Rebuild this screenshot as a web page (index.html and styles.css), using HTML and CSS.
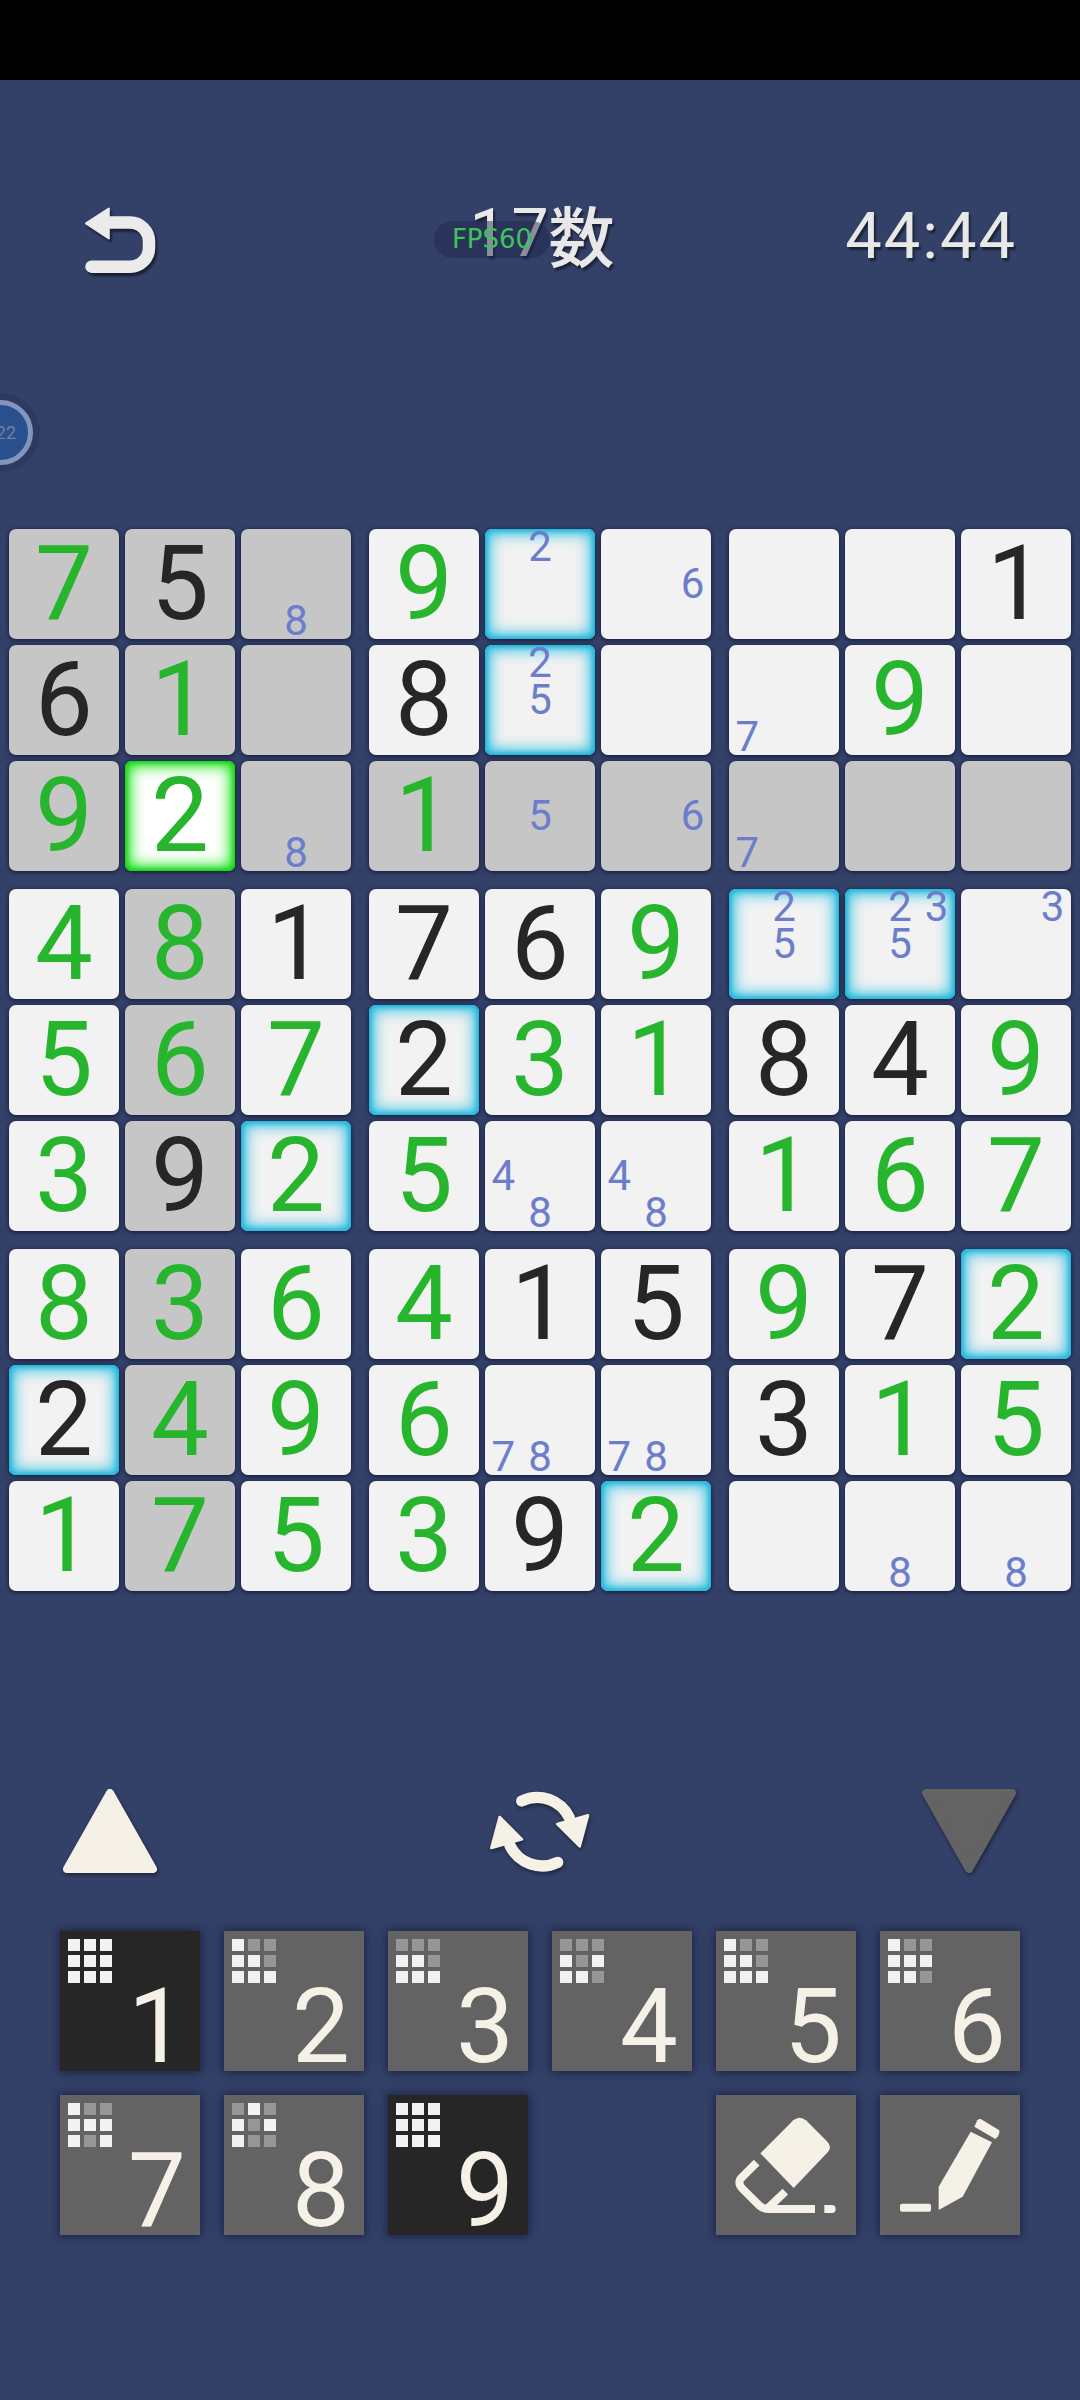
FILE: index.html
```html
<!DOCTYPE html>
<html lang="ja">
<head>
    <meta charset="UTF-8">
    <meta name="viewport" content="width=device-width, initial-scale=1.0">
    <title>Sudoku</title>
    <link rel="stylesheet" href="styles.css">
</head>
<body>
    <div class="page">
        <div class="status-bar"></div>

        <div class="header">
            <svg class="back-icon" viewBox="0 0 73 70">
                <path class="back-line" d="M22 17.5H46a19 19 0 0 1 19 19V42.7a19 19 0 0 1-19 19H7.5"/>
                <path class="back-head" d="M2 18.3L24.8 3.5V33.5Z"/>
            </svg>
            <div class="title"><span class="title-num">17</span><span class="title-kanji">数</span></div>
            <div class="timer">44:44</div>
        </div>

        <div class="fps">FPS60</div>
        <div class="side-badge"><span>22</span></div>

        <div class="board">
            <div class="box">
                <div class="cell shade green">7</div>
                <div class="cell shade dark">5</div>
                <div class="cell shade notes"><span class="n8">8</span></div>
                <div class="cell shade dark">6</div>
                <div class="cell shade green">1</div>
                <div class="cell shade"></div>
                <div class="cell shade green">9</div>
                <div class="cell picked green">2</div>
                <div class="cell shade notes"><span class="n8">8</span></div>
            </div>
            <div class="box">
                <div class="cell green">9</div>
                <div class="cell glow notes"><span class="n2">2</span></div>
                <div class="cell notes"><span class="n6">6</span></div>
                <div class="cell dark">8</div>
                <div class="cell glow notes"><span class="n2">2</span><span class="n5">5</span></div>
                <div class="cell"></div>
                <div class="cell shade green">1</div>
                <div class="cell shade notes"><span class="n5">5</span></div>
                <div class="cell shade notes"><span class="n6">6</span></div>
            </div>
            <div class="box">
                <div class="cell"></div>
                <div class="cell"></div>
                <div class="cell dark">1</div>
                <div class="cell notes"><span class="n7">7</span></div>
                <div class="cell green">9</div>
                <div class="cell"></div>
                <div class="cell shade notes"><span class="n7">7</span></div>
                <div class="cell shade"></div>
                <div class="cell shade"></div>
            </div>

            <div class="box">
                <div class="cell green">4</div>
                <div class="cell shade green">8</div>
                <div class="cell dark">1</div>
                <div class="cell green">5</div>
                <div class="cell shade green">6</div>
                <div class="cell green">7</div>
                <div class="cell green">3</div>
                <div class="cell shade dark">9</div>
                <div class="cell glow green">2</div>
            </div>
            <div class="box">
                <div class="cell dark">7</div>
                <div class="cell dark">6</div>
                <div class="cell green">9</div>
                <div class="cell glow dark">2</div>
                <div class="cell green">3</div>
                <div class="cell green">1</div>
                <div class="cell green">5</div>
                <div class="cell notes"><span class="n4">4</span><span class="n8">8</span></div>
                <div class="cell notes"><span class="n4">4</span><span class="n8">8</span></div>
            </div>
            <div class="box">
                <div class="cell glow notes"><span class="n2">2</span><span class="n5">5</span></div>
                <div class="cell glow notes"><span class="n2">2</span><span class="n3">3</span><span class="n5">5</span></div>
                <div class="cell notes"><span class="n3">3</span></div>
                <div class="cell dark">8</div>
                <div class="cell dark">4</div>
                <div class="cell green">9</div>
                <div class="cell green">1</div>
                <div class="cell green">6</div>
                <div class="cell green">7</div>
            </div>

            <div class="box">
                <div class="cell green">8</div>
                <div class="cell shade green">3</div>
                <div class="cell green">6</div>
                <div class="cell glow dark">2</div>
                <div class="cell shade green">4</div>
                <div class="cell green">9</div>
                <div class="cell green">1</div>
                <div class="cell shade green">7</div>
                <div class="cell green">5</div>
            </div>
            <div class="box">
                <div class="cell green">4</div>
                <div class="cell dark">1</div>
                <div class="cell dark">5</div>
                <div class="cell green">6</div>
                <div class="cell notes"><span class="n7">7</span><span class="n8">8</span></div>
                <div class="cell notes"><span class="n7">7</span><span class="n8">8</span></div>
                <div class="cell green">3</div>
                <div class="cell dark">9</div>
                <div class="cell glow green">2</div>
            </div>
            <div class="box">
                <div class="cell green">9</div>
                <div class="cell dark">7</div>
                <div class="cell glow green">2</div>
                <div class="cell dark">3</div>
                <div class="cell green">1</div>
                <div class="cell green">5</div>
                <div class="cell"></div>
                <div class="cell notes"><span class="n8">8</span></div>
                <div class="cell notes"><span class="n8">8</span></div>
            </div>
        </div>

        <div class="controls">
            <svg class="arrow-icon" viewBox="0 0 94 84"><path class="arrow-up" d="M47 4L90 80H4Z"/></svg>
            <svg class="refresh-icon" viewBox="0 0 360 330">
                <g>
                    <path class="refresh-line" d="M125 75A107 107 0 0 1 268 125"/>
                    <path class="refresh-head" d="M232 144L324 118L299 211Z"/>
                </g>
                <g transform="rotate(180 179 167)">
                    <path class="refresh-line" d="M125 75A107 107 0 0 1 268 125"/>
                    <path class="refresh-head" d="M232 144L324 118L299 211Z"/>
                </g>
            </svg>
            <svg class="arrow-icon" viewBox="0 0 94 84"><path class="arrow-down" d="M4 4H90L47 80Z"/></svg>
        </div>

        <div class="keypad">
            <div class="key active">
                <div class="mini"><i></i><i></i><i></i><i></i><i></i><i></i><i></i><i></i><i></i></div>
                <div class="key-num">1</div>
            </div>
            <div class="key">
                <div class="mini"><i></i><i class="off"></i><i class="off"></i><i></i><i></i><i class="off"></i><i></i><i></i><i></i></div>
                <div class="key-num">2</div>
            </div>
            <div class="key">
                <div class="mini"><i class="off"></i><i class="off"></i><i class="off"></i><i></i><i></i><i class="off"></i><i></i><i></i><i></i></div>
                <div class="key-num">3</div>
            </div>
            <div class="key">
                <div class="mini"><i class="off"></i><i class="off"></i><i class="off"></i><i></i><i class="off"></i><i></i><i></i><i></i><i class="off"></i></div>
                <div class="key-num">4</div>
            </div>
            <div class="key">
                <div class="mini"><i></i><i class="off"></i><i class="off"></i><i></i><i></i><i class="off"></i><i></i><i></i><i></i></div>
                <div class="key-num">5</div>
            </div>
            <div class="key">
                <div class="mini"><i></i><i class="off"></i><i class="off"></i><i></i><i></i><i></i><i></i><i></i><i class="off"></i></div>
                <div class="key-num">6</div>
            </div>
            <div class="key">
                <div class="mini"><i></i><i class="off"></i><i class="off"></i><i></i><i></i><i></i><i></i><i class="off"></i><i></i></div>
                <div class="key-num">7</div>
            </div>
            <div class="key">
                <div class="mini"><i class="off"></i><i></i><i class="off"></i><i></i><i class="off"></i><i></i><i></i><i class="off"></i><i class="off"></i></div>
                <div class="key-num">8</div>
            </div>
            <div class="key active">
                <div class="mini"><i></i><i></i><i></i><i></i><i></i><i></i><i></i><i></i><i></i></div>
                <div class="key-num">9</div>
            </div>
            <div class="key-blank"></div>
            <div class="key">
                <svg class="tool-icon" viewBox="0 0 420 420">
                    <path class="tool-fill" d="M133 175L232 76Q250 60 270 76L332 138Q350 156 335 172L233 279Z"/>
                    <path class="tool-line" d="M122 203L80 245Q60 262 80 282L130 332Q142 342 160 342H297M208 290L155 340"/>
                    <path class="tool-fill" d="M325 330H347Q359 330 359 342Q359 354 347 354H325Z"/>
                </svg>
            </div>
            <div class="key">
                <svg class="tool-icon" viewBox="0 0 420 420">
                    <path class="tool-fill" d="M272 110L336 142L248 305L176 345V275Z"/>
                    <path class="tool-fill" d="M302 72L358 106Q360 112 354 124L346 132L283 95L292 76Q296 71 302 72Z"/>
                    <rect class="tool-fill" x="60" y="326" width="93" height="24" rx="6"/>
                </svg>
            </div>
        </div>
    </div>
</body>
</html>
```

FILE: styles.css
```css
html, body {
    margin: 0;
    padding: 0;
    background-color: #334068;
}

.page {
    position: relative;
    width: 1080px;
    height: 2400px;
    overflow: hidden;
    font-family: Roboto, "Noto Sans CJK SC", sans-serif;
}

.status-bar {
    height: 80px;
    background-color: #000;
}

/* header */

.header {
    display: grid;
    grid-template-columns: 1fr auto 1fr;
    align-items: center;
    height: 70px;
    margin-top: 125px;
    padding: 0 63px 0 84px;
}

.back-icon {
    width: 73px;
    height: 70px;
    filter: drop-shadow(2px 3px 1px rgba(0, 0, 0, 0.5));
}

.back-line {
    fill: none;
    stroke: #ebebeb;
    stroke-width: 12.5;
    stroke-linecap: round;
}

.back-head {
    fill: #ebebeb;
    stroke: #ebebeb;
    stroke-width: 2;
    stroke-linejoin: round;
}

.title,
.timer {
    color: #e8e8e8;
    text-shadow: 2px 3px 2px rgba(0, 0, 0, 0.45);
}

.title {
    display: flex;
    align-items: center;
    height: 70px;
    margin-top: -14px;
    margin-left: -17px;
}

.title-num {
    font-size: 66px;
    letter-spacing: 5px;
}

.title-kanji {
    margin-left: -5px;
    font-family: "Noto Sans CJK SC", sans-serif;
    font-size: 66px;
    font-weight: 500;
}

.timer {
    justify-self: end;
    margin-top: -8px;
    font-size: 65px;
    letter-spacing: 2px;
}

.fps {
    position: absolute;
    left: 434px;
    top: 221px;
    width: 116px;
    height: 37px;
    border-radius: 19px;
    background-color: rgba(32, 38, 74, 0.47);
    color: #3fc25a;
    font-family: "DejaVu Sans", sans-serif;
    font-size: 26px;
    line-height: 37px;
    text-align: center;
}

.side-badge {
    position: absolute;
    left: -32px;
    top: 400px;
    display: flex;
    justify-content: flex-end;
    align-items: center;
    box-sizing: border-box;
    width: 65px;
    height: 65px;
    padding-right: 12px;
    border: 5px solid #8494bd;
    border-radius: 50%;
    background-color: #2a4f8d;
    box-shadow: 0 0 0 7px rgba(38, 48, 82, 0.45);
    color: #71829f;
    font-size: 18px;
}

/* board */

.board {
    display: grid;
    grid-template-columns: repeat(3, 342px);
    gap: 18px;
    margin-top: 254px;
    margin-left: 9px;
}

.box {
    display: grid;
    grid-template-columns: repeat(3, 110px);
    grid-auto-rows: 110px;
    gap: 6px;
}

.cell {
    display: grid;
    place-items: center;
    border-radius: 7px;
    background-color: #f2f2f2;
    box-shadow: 0 1px 4px rgba(10, 15, 40, 0.9);
    font-size: 103px;
    line-height: 110px;
}

.shade {
    background-color: #c6c6c6;
}

.glow {
    box-shadow: inset 0 0 5px 2px #14b2da, inset 0 0 14px 6px #45c6e4, 0 1px 4px rgba(10, 15, 40, 0.9);
}

.picked {
    background-color: #fff;
    box-shadow: inset 0 0 5px 2px #0cd00c, inset 0 0 14px 6px #2fe82f, 0 1px 4px rgba(10, 15, 40, 0.9);
}

.green {
    color: #28b52e;
}

.dark {
    color: #262626;
}

.notes {
    grid-template-columns: repeat(3, 1fr);
    grid-template-rows: repeat(3, 1fr);
    color: #6b7dcb;
    font-size: 42px;
    line-height: 36px;
}

.n2 { grid-area: 1 / 2; }
.n3 { grid-area: 1 / 3; }
.n4 { grid-area: 2 / 1; }
.n5 { grid-area: 2 / 2; }
.n6 { grid-area: 2 / 3; }
.n7 { grid-area: 3 / 1; }
.n8 { grid-area: 3 / 2; }

/* arrows and refresh */

.controls {
    display: flex;
    justify-content: space-between;
    align-items: center;
    height: 85px;
    margin-top: 197px;
    padding: 0 64px 0 63px;
}

.arrow-icon {
    width: 94px;
    height: 84px;
    filter: drop-shadow(1px 2px 2px rgba(0, 0, 0, 0.45));
}

.arrow-up,
.arrow-down {
    stroke-width: 8;
    stroke-linejoin: round;
}

.arrow-up {
    fill: #f6f1e7;
    stroke: #f6f1e7;
}

.arrow-down {
    fill: #636363;
    stroke: #636363;
}

.refresh-icon {
    width: 120px;
    height: 110px;
    margin: -13px -10px;
    filter: drop-shadow(1px 2px 2px rgba(0, 0, 0, 0.45));
}

.refresh-line {
    fill: none;
    stroke: #f6f1e7;
    stroke-width: 34;
    stroke-linecap: round;
}

.refresh-head {
    fill: #f6f1e7;
    stroke: #f6f1e7;
    stroke-width: 8;
    stroke-linejoin: round;
}

/* keypad */

.keypad {
    display: grid;
    grid-template-columns: repeat(6, 140px);
    grid-auto-rows: 140px;
    gap: 24px;
    margin-top: 58px;
    margin-left: 60px;
}

.key {
    display: flex;
    flex-direction: column;
    box-sizing: border-box;
    padding: 8px;
    background-color: #636363;
    box-shadow: 0 0 9px 1px rgba(18, 24, 52, 0.75);
    color: #f6f1e7;
}

.active {
    background-color: #262626;
}

.mini {
    display: grid;
    grid-template-columns: repeat(3, 12px);
    grid-auto-rows: 12px;
    gap: 4px;
}

.mini i {
    background-color: #f2f2f2;
}

.mini .off {
    background-color: #969696;
}

.key-num {
    align-self: flex-end;
    width: 56px;
    margin-top: 7px;
    margin-right: 8px;
    font-size: 103px;
    line-height: 73px;
    text-align: center;
}

.tool-icon {
    width: 140px;
    height: 140px;
    margin: -8px;
}

.tool-fill {
    fill: #f6f1e7;
}

.tool-line {
    fill: none;
    stroke: #f6f1e7;
    stroke-width: 24;
}
```
